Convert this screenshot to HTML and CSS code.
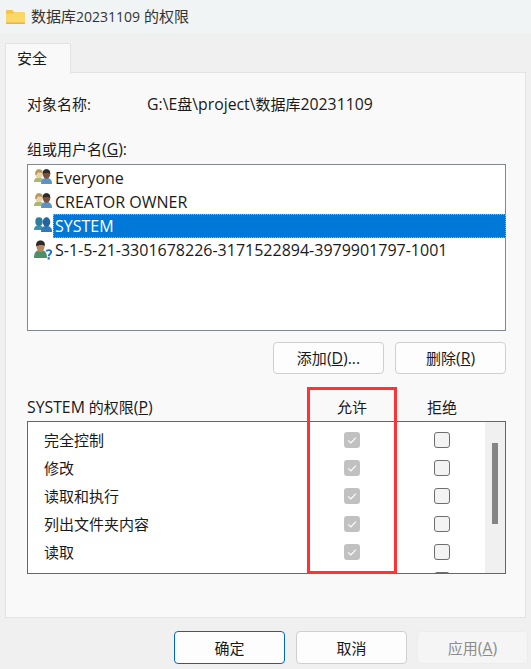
FILE: index.html
```html
<!DOCTYPE html>
<html lang="zh-CN">
<head>
<meta charset="utf-8">
<title>数据库20231109 的权限</title>
<link rel="stylesheet" href="styles.css">
</head>
<body>
<svg class="defs" width="0" height="0" aria-hidden="true">
  <symbol id="ck" viewBox="0 0 16 16"><path d="M4.200 8.300 6.900 10.900 11.900 5.600" fill="none" stroke="#fff" stroke-width="1.100"/></symbol>
  <symbol id="group" viewBox="0 0 20 18">
    <path d="M1 13c0-3.200 1.800-4.700 4.800-4.700S10.500 10 10.500 13z" fill="#a9b96f"/>
    <ellipse cx="6" cy="4.600" rx="3.700" ry="4.400" fill="#ecd0aa"/>
    <path d="M2.300 6C1.800 2 3.800.2 6 .2s4 1.500 3.700 3.500C8 4 5.500 3 4.800 3.800 4 4.800 3.800 6 2.300 6z" fill="#b89a5c"/>
    <path d="M8 15c0-4.200 2-6 5.500-6S19 10.800 19 15z" fill="#5d92c4"/>
    <ellipse cx="13.500" cy="5" rx="3.800" ry="4.700" fill="#7a5238"/>
    <path d="M9.700 4.800C9.500 1.600 11.300.2 13.500.2s4 1.400 3.800 4.600c-1-1-6.500-1-7.600 0z" fill="#2f2a26"/>
  </symbol>
  <symbol id="sys" viewBox="0 0 20 18">
    <path d="M1 13c0-3.200 1.800-4.700 4.800-4.700S10.500 10 10.500 13z" fill="#3b8fa8"/>
    <ellipse cx="6" cy="4.600" rx="3.700" ry="4.400" fill="#2f7d9c"/>
    <path d="M8 15c0-4.200 2-6 5.500-6S19 10.800 19 15z" fill="#2f78bd"/>
    <ellipse cx="13.500" cy="5" rx="3.800" ry="4.700" fill="#23669f"/>
  </symbol>
  <symbol id="unk" viewBox="0 0 20 20">
    <path d="M1 18c0-6 2.500-8 6.500-8s6.500 2 6.500 8z" fill="#4f8f68"/>
    <path d="M3.500 6c0-3.500 2-5.200 4-5.200s4 1.700 4 5.200-2 6-4 6-4-2.500-4-6z" fill="#b8875e"/>
    <path d="M3.200 6.500C2.500 2 5 .4 7.500.4s5 1.600 4.300 5.600C10 4.500 5.500 4.500 3.200 6.500z" fill="#2f2a26"/>
    <path d="M13.300 11.300c.6-1.600 4.700-1.700 4.900.6.200 2-2.400 2.200-2.500 4.400" fill="none" stroke="#1f6fc0" stroke-width="1.900"/>
    <rect x="14.600" y="17.200" width="2.100" height="2.300" fill="#1f6fc0"/>
  </symbol>
</svg>

<div class="window">
  <header class="titlebar">
    <svg class="folder" width="19" height="14" viewBox="0 0 19 14">
      <path d="M0 1.500C0 .7.600 0 1.400 0h4.800l2 2.200h9.400c.8 0 1.400.6 1.400 1.400v9c0 .8-.6 1.400-1.400 1.400H1.400C.6 14 0 13.400 0 12.600z" fill="#f6c444"/>
      <path d="M0 3.800 7 3.800 9 2.200h8.600c.8 0 1.400.6 1.400 1.400v9c0 .8-.6 1.400-1.400 1.400H1.400C.6 14 0 13.400 0 12.600z" fill="#fbd768"/>
      <rect y="12.600" width="19" height="1.400" rx=".7" fill="#eeb23a"/>
    </svg>
    <span class="title">数据库<span class="num">20231109</span> 的权限</span>
  </header>

  <div class="tabs"><div class="tab">安全</div></div>

  <main class="panel">
    <div class="object-row">
      <span class="object-label">对象名称:</span>
      <span><span class="lat">G:\E</span>盘<span class="lat">\project\</span>数据库<span class="lat">20231109</span></span>
    </div>

    <div class="group-label">组或用户名<span class="lat">(<u>G</u>):</span></div>
    <ul class="userlist">
      <li class="user"><svg class="uicon" width="20" height="18"><use href="#group"/></svg><span class="uname">Everyone</span></li>
      <li class="user"><svg class="uicon" width="20" height="18"><use href="#group"/></svg><span class="uname">CREATOR OWNER</span></li>
      <li class="user"><svg class="uicon" width="20" height="18"><use href="#sys"/></svg><span class="uname selected">SYSTEM</span></li>
      <li class="user"><svg class="uicon" width="20" height="20"><use href="#unk"/></svg><span class="uname">S-1-5-21-3301678226-3171522894-3979901797-1001</span></li>
    </ul>

    <div class="actions">
      <button class="btn">添加<span class="lat">(<u>D</u>)...</span></button>
      <button class="btn">删除<span class="lat">(<u>R</u>)</span></button>
    </div>

    <div class="perm-head">
      <span class="perm-title"><span class="lat">SYSTEM</span> 的权限<span class="lat">(<u>P</u>)</span></span>
      <span class="col">允许</span>
      <span class="col">拒绝</span>
    </div>

    <div class="permbox">
      <div class="rows">
        <div class="row"><span class="perm-name">完全控制</span><span class="cell"><span class="chk on"><svg width="16" height="16"><use href="#ck"/></svg></span></span><span class="cell"><span class="chk"></span></span></div>
        <div class="row"><span class="perm-name">修改</span><span class="cell"><span class="chk on"><svg width="16" height="16"><use href="#ck"/></svg></span></span><span class="cell"><span class="chk"></span></span></div>
        <div class="row"><span class="perm-name">读取和执行</span><span class="cell"><span class="chk on"><svg width="16" height="16"><use href="#ck"/></svg></span></span><span class="cell"><span class="chk"></span></span></div>
        <div class="row"><span class="perm-name">列出文件夹内容</span><span class="cell"><span class="chk on"><svg width="16" height="16"><use href="#ck"/></svg></span></span><span class="cell"><span class="chk"></span></span></div>
        <div class="row"><span class="perm-name">读取</span><span class="cell"><span class="chk on"><svg width="16" height="16"><use href="#ck"/></svg></span></span><span class="cell"><span class="chk"></span></span></div>
        <div class="row"><span class="perm-name"></span><span class="cell"></span><span class="cell"><span class="chk"></span></span></div>
      </div>
      <div class="scrollbar"><div class="thumb"></div></div>
    </div>
    <div class="highlight"></div>
  </main>

  <footer class="footer">
    <button class="btn primary">确定</button>
    <button class="btn">取消</button>
    <button class="btn disabled">应用<span class="lat">(<u>A</u>)</span></button>
  </footer>
</div>
</body>
</html>
```
FILE: styles.css
```css
* { box-sizing: border-box; }
html, body { margin: 0; height: 100%; }
body {
  background: #f0f0f0;
  color: #1a1a1a;
  font: 15px/20px "Open Sans", "Noto Sans CJK SC", sans-serif;
  overflow: hidden;
}
.lat { font-size: 15.8px; }
.num { font-size: 14px; }
.defs { position: absolute; }
.window { width: 531px; height: 669px; display: flex; flex-direction: column; }
.titlebar {
  height: 33px;
  background: #f0f4f4;
  display: flex;
  align-items: center;
  gap: 6px;
  padding-left: 6px;
  flex: none;
}
.folder { flex: none; }
.title { color: #333; }
.tabs { height: 40px; padding: 10px 0 0 5px; flex: none; display: flex; }
.tab {
  width: 66px;
  height: 31px;
  background: #f9f9f9;
  border: 1px solid #e3e3e3;
  border-bottom: 0;
  border-radius: 2px 2px 0 0;
  padding-left: 11px;
  line-height: 29px;
  position: relative;
  z-index: 1;
}
.panel {
  position: relative;
  flex: none;
  width: 521px;
  height: 546px;
  margin: -1px 0 0 5px;
  background: #f9f9f9;
  border: 1px solid #e3e3e3;
  padding: 21px 19px 0 21px;
}
.object-row { display: flex; height: 20px; }
.object-label { width: 120px; }
.group-label { margin-top: 25px; height: 20px; }
.userlist {
  list-style: none;
  margin: 5px 0 0;
  padding: 1px 0 0 5px;
  height: 167px;
  background: #fff;
  border: 1px solid #828790;
}
.user { display: flex; align-items: center; height: 24px; font-size: 16px; }
.uicon { flex: none; }
.uname { height: 24px; line-height: 22px; padding: 0 1px; border: 1px dotted transparent; }
.uname.selected { background: #0078d7; color: #fff; flex: 1; margin-right: -1px; border-color: #f5a623; }
.actions { display: flex; justify-content: flex-end; gap: 11px; margin-top: 11px; }
.btn {
  width: 111px;
  height: 32px;
  padding: 0;
  background: #fdfdfd;
  border: 1px solid #cfcfcf;
  border-radius: 4px;
  color: #1a1a1a;
  font: inherit;
}
.perm-head { display: flex; align-items: center; margin-top: 23px; height: 20px; }
.perm-title { width: 280px; }
.col { width: 90px; text-align: center; }
.permbox {
  display: flex;
  margin-top: 4px;
  height: 153px;
  background: #fff;
  border: 1px solid #666;
  overflow: hidden;
}
.rows { flex: 1; padding-top: 4px; min-width: 0; }
.row { display: flex; align-items: center; height: 28px; padding-left: 16px; }
.perm-name { width: 263px; flex: none; }
.cell { width: 90px; flex: none; display: flex; justify-content: center; }
.chk {
  display: block;
  width: 16px;
  height: 16px;
  flex: none;
  background: #f3f3f3;
  border: 1px solid #6e6e6e;
  border-radius: 3px;
}
.chk.on { border: 0; background: #c1c1c1; }
.chk svg { display: block; }
.scrollbar {
  position: relative;
  width: 20px;
  flex: none;
  padding: 21px 7px 0;
  background: #f0f0f0;
}
.thumb { width: 6px; height: 81px; background: #858585; }
.highlight {
  position: absolute;
  left: 301px;
  top: 314px;
  width: 90px;
  height: 187px;
  border: 3px solid #ff3333;
  pointer-events: none;
}
.footer { display: flex; gap: 11px; padding: 13px 0 0 174px; }
.footer .btn { height: 33px; }
.footer .disabled { margin-left: -1px; }
.primary { border-color: #0067c0; }
.disabled { background: #f5f5f5; border-color: #ededed; color: #8c8c8c; }
```
